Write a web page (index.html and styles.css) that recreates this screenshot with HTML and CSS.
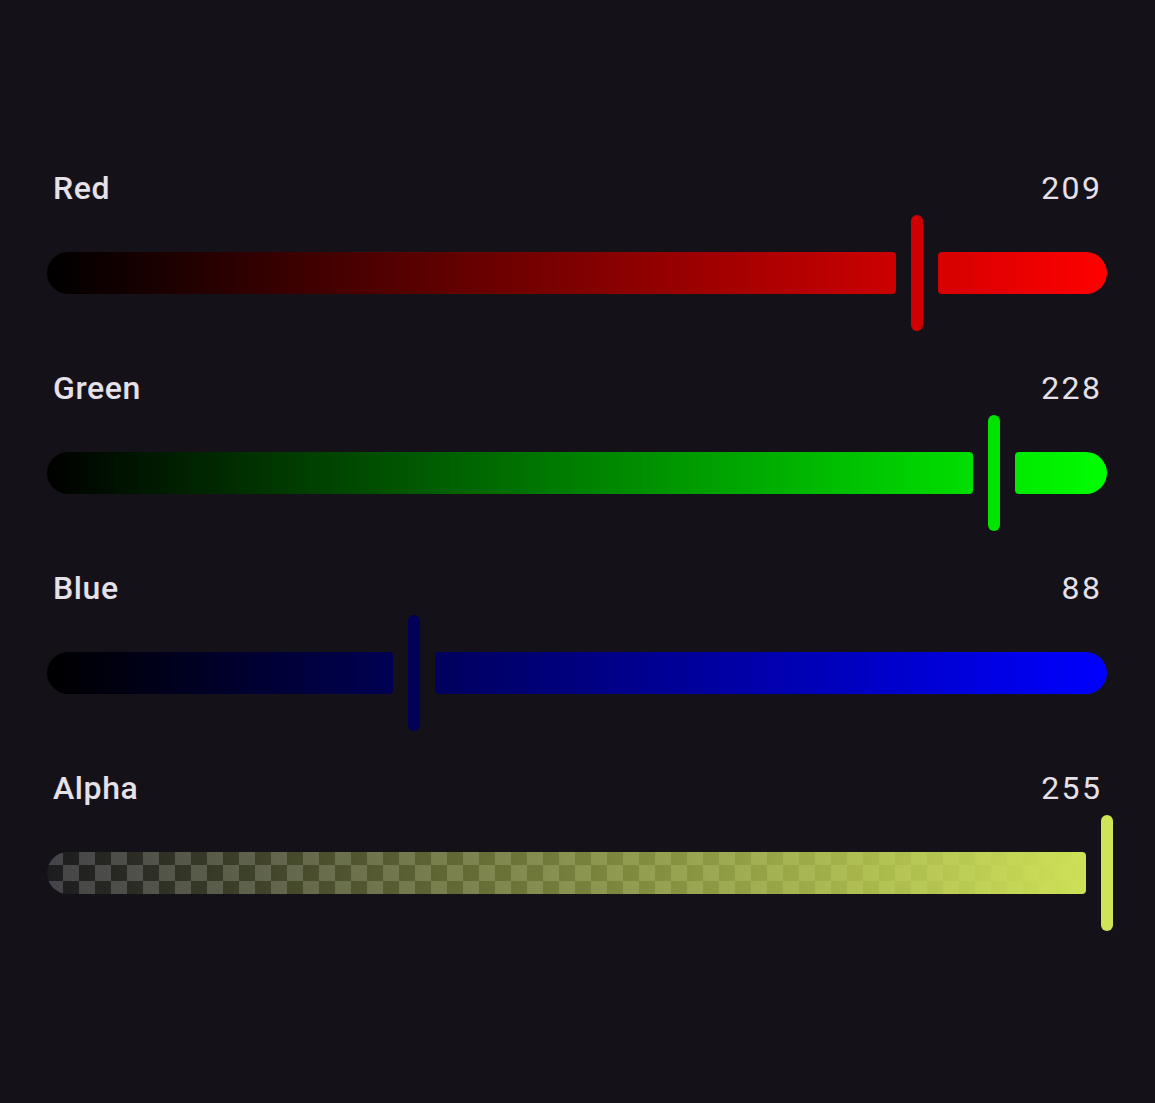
FILE: index.html
```html
<!DOCTYPE html>
<html>
<head>
    <title>Colour channels</title>
    <meta charset="utf-8" />
    <link rel="stylesheet" href="styles.css">
</head>
<body>
    <div id="channels">
        <div class="channel red">
            <div class="label-row"><span class="name">Red</span><span class="value">209</span></div>
            <div class="slider">
                <div class="seg seg-start" style="width:849px"></div>
                <div class="thumb"></div>
                <div class="seg seg-end" style="background-position:-891px 0"></div>
            </div>
        </div>
        <div class="channel green">
            <div class="label-row"><span class="name">Green</span><span class="value">228</span></div>
            <div class="slider">
                <div class="seg seg-start" style="width:926px"></div>
                <div class="thumb"></div>
                <div class="seg seg-end" style="background-position:-968px 0"></div>
            </div>
        </div>
        <div class="channel blue">
            <div class="label-row"><span class="name">Blue</span><span class="value">88</span></div>
            <div class="slider">
                <div class="seg seg-start" style="width:346px"></div>
                <div class="thumb"></div>
                <div class="seg seg-end" style="background-position:-388px 0"></div>
            </div>
        </div>
        <div class="channel alpha">
            <div class="label-row"><span class="name">Alpha</span><span class="value">255</span></div>
            <div class="slider">
                <div class="seg seg-start" style="width:1039px"></div>
                <div class="thumb"></div>
            </div>
        </div>
    </div>
</body>
</html>
```

FILE: styles.css
```css
html, body { margin:0; padding:0; }
body { background-color:#141218; color:#e6e0e9; font-family:Roboto, "Noto Sans", sans-serif; width:1155px; height:1103px; }

#channels { display:flex; flex-direction:column; gap:37px; padding:168px 48px 0 47px; }
.channel { display:flex; flex-direction:column; gap:7px; }

.label-row { display:flex; justify-content:space-between; padding:0 7px 0 6px; height:40px; line-height:40px; font-size:32px; }
.name { font-weight:500; letter-spacing:0.6px; }
.value { font-weight:400; letter-spacing:2.4px; margin-right:-2.4px; }

/* track pieces share one gradient laid over the full 1060px track */
.slider { display:flex; align-items:center; gap:15px; height:116px; }
.seg { height:42px; background-size:1060px 100%; background-repeat:no-repeat; }
.seg-start { flex:none; border-radius:21px 4px 4px 21px; }
.seg-end { flex:1; border-radius:4px 21px 21px 4px; }
.thumb { flex:none; width:12px; height:116px; border-radius:6px; }

.red .seg { background-image:linear-gradient(90deg, #000, #f00); }
.red .thumb { background-color:#d10000; }
.green .seg { background-image:linear-gradient(90deg, #000, #0f0); }
.green .thumb { background-color:#00e400; }
.blue .seg { background-image:linear-gradient(90deg, #000, #00f); }
.blue .thumb { background-color:#000058; }

/* alpha: colour fades in over a checkerboard */
.alpha .seg {
    background-image:linear-gradient(90deg, rgba(209,228,88,0), rgb(209,228,88)),
                     repeating-conic-gradient(#1c1b1f 0 25%, #444348 0 50%);
    background-size:1060px 100%, 32px 32px;
    background-position:0 0, 0 -3px;
    background-repeat:no-repeat, repeat;
}
.alpha .thumb { background-color:#d1e458; }
```
